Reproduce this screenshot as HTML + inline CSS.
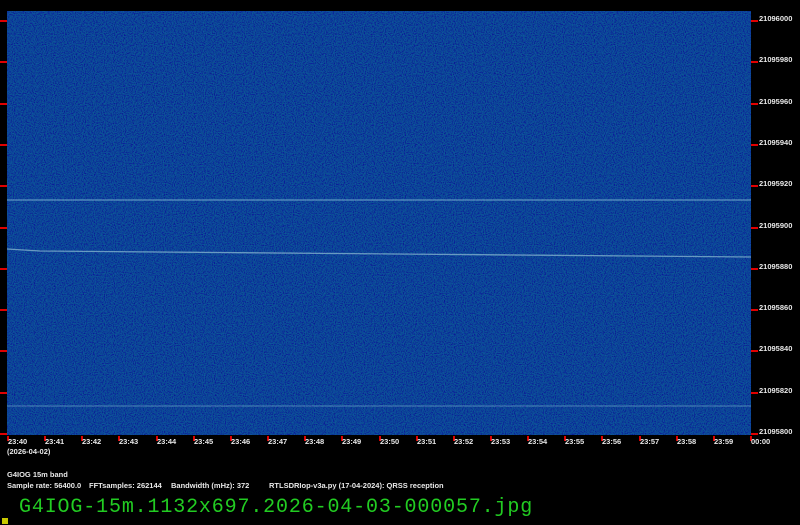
<!DOCTYPE html>
<html><head><meta charset="utf-8"><style>
html,body{margin:0;padding:0;background:#000;width:800px;height:525px;overflow:hidden;position:relative;font-family:"Liberation Sans",sans-serif}
.t{position:absolute;color:#e8e8e8;font-size:7.5px;font-weight:bold;white-space:nowrap}
.rk{position:absolute;background:#e00000;height:2px;width:7px}
.bk{position:absolute;background:#e00000;width:2px;height:5px;top:436px}
</style></head><body>
<svg width="800" height="525" style="position:absolute;left:0;top:0">
<defs>
<filter id="n" x="0" y="0" width="100%" height="100%">
<feTurbulence type="fractalNoise" baseFrequency="0.9" numOctaves="1" seed="3" result="t"/>
<feColorMatrix in="t" type="matrix" values="0 0 0 0 0  1.6 0 0 0 -0.55  0 0 1.2 0 -0.1  0 0 0 0 1"/>
</filter>
</defs>
<rect x="7" y="11" width="744" height="424" fill="#0c1a74"/>
<rect x="7" y="11" width="744" height="424" filter="url(#n)" opacity="0.35" style="mix-blend-mode:screen"/>
<line x1="7" y1="200" x2="751" y2="200" stroke="#7ab0d0" stroke-width="1.3" opacity="0.75"/>
<polyline points="7,249 40,251 751,257" fill="none" stroke="#8ab8d0" stroke-width="1.3" opacity="0.75"/>
<line x1="7" y1="406" x2="751" y2="406" stroke="#7ab0d0" stroke-width="1.1" opacity="0.6"/>
</svg>
<div id="ticks"></div>
<div class="t" style="left:7px;top:447px">(2026-04-02)</div>
<div class="t" style="left:7px;top:470px">G4IOG 15m band</div>
<div class="t" style="left:7px;top:481px">Sample rate: 56400.0</div>
<div class="t" style="left:89px;top:481px">FFTsamples: 262144</div>
<div class="t" style="left:171px;top:481px">Bandwidth (mHz): 372</div>
<div class="t" style="left:269px;top:481px">RTLSDRIop-v3a.py (17-04-2024): QRSS reception</div>
<div style="position:absolute;left:19px;top:496px;color:#22cc22;font-family:'Liberation Mono',monospace;font-size:20px;letter-spacing:0.85px">G4IOG-15m.1132x697.2026-04-03-000057.jpg</div>
<div style="position:absolute;left:2px;top:518px;width:6px;height:6px;background:#c8c800"></div>
<script>
var h='';
var labs=['21096000','21095980','21095960','21095940','21095920','21095900','21095880','21095860','21095840','21095820','21095800'];
for(var i=0;i<11;i++){var y=Math.round(20+i*41.3);
h+='<div class="rk" style="left:0;top:'+y+'px"></div><div class="rk" style="left:751px;top:'+y+'px"></div>';
h+='<div class="t" style="left:759px;top:'+(y-6)+'px">'+labs[i]+'</div>';}
for(var j=0;j<=20;j++){var x=Math.round(7+j*37.15);
var m=j<20?'23:'+(40+j):'00:00';
h+='<div class="bk" style="left:'+x+'px"></div><div class="t" style="left:'+(x+1)+'px;top:437px">'+m+'</div>';}
document.getElementById('ticks').innerHTML=h;
</script>
</body></html>
